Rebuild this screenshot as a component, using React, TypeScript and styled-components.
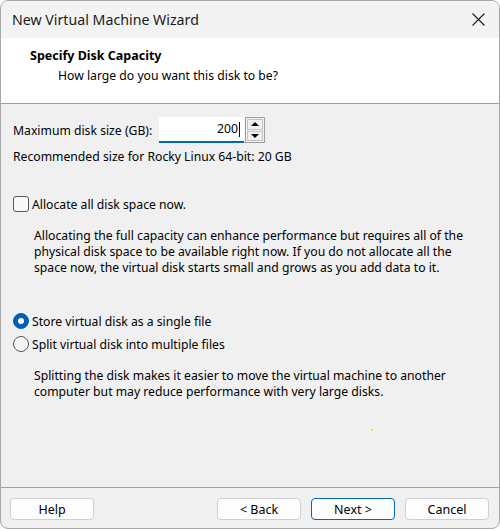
import React from 'react'
import styled, { createGlobalStyle } from 'styled-components'

const GlobalStyle = createGlobalStyle`
  html, body {
    margin: 0;
    padding: 0;
    background: #ffffff;
  }
  * {
    box-sizing: border-box;
  }
`

const Window = styled.div`
  width: 500px;
  height: 529px;
  display: flex;
  flex-direction: column;
  border: 1px solid #a8a8a8;
  border-radius: 8px;
  overflow: hidden;
  background: #f0f0f0;
  font-family: 'Noto Sans', 'DejaVu Sans', sans-serif;
  font-size: 12.2px;
  color: #000000;
`

const TitleBar = styled.div`
  height: 37px;
  flex: none;
  display: flex;
  align-items: center;
  justify-content: space-between;
  padding: 0 14px 0 11px;
  background: #f3f3f3;
  font-size: 14.2px;
  color: #1b1b1b;
`

const CloseButton = styled.div`
  width: 14px;
  height: 14px;
  display: flex;
  align-items: center;
  justify-content: center;
`

const Header = styled.div`
  height: 66px;
  flex: none;
  padding: 9px 0 0 29px;
  background: #ffffff;
  border-bottom: 1px solid #a0a0a0;
`

const HeaderTitle = styled.div`
  font-weight: 700;
  font-size: 12.5px;
  line-height: 18px;
`

const HeaderSub = styled.div`
  padding-left: 28px;
  line-height: 18px;
  margin-top: 2px;
`

const Body = styled.div`
  flex: 1;
  padding: 13px 12px 0 12px;
  position: relative;
`

const SizeRow = styled.div`
  display: flex;
  align-items: center;
  height: 26px;
`

const SizeLabel = styled.div`
  width: 146px;
`

const SizeInput = styled.div`
  width: 85px;
  height: 26px;
  background: #ffffff;
  border-bottom: 2px solid #0067c0;
  display: flex;
  align-items: center;
  justify-content: flex-end;
  padding-right: 4px;
  line-height: 16px;
`

const Caret = styled.span`
  display: inline-block;
  width: 1px;
  height: 15px;
  background: #000000;
  margin-left: 1px;
`

const Spinner = styled.div`
  width: 20px;
  height: 26px;
  margin-left: 1px;
  border: 1px solid #a0a0a0;
  display: flex;
  flex-direction: column;
  padding: 1px;
  gap: 1px;
`

const SpinButton = styled.div`
  flex: 1;
  border: 1px solid #c4c4c4;
  background: #f0f0f0;
  display: flex;
  align-items: center;
  justify-content: center;
`

const Arrow = styled.div<{ $up?: boolean }>`
  width: 0;
  height: 0;
  border-left: 4px solid transparent;
  border-right: 4px solid transparent;
  ${({ $up }) => ($up ? 'border-bottom: 4px solid #000;' : 'border-top: 4px solid #000;')}
`

const Line = styled.div<{ $top?: number }>`
  margin-top: ${({ $top }) => $top ?? 0}px;
  line-height: 16px;
`

const OptionRow = styled.div<{ $top?: number }>`
  display: flex;
  align-items: center;
  gap: 3px;
  height: 20px;
  margin-top: ${({ $top }) => $top ?? 0}px;
`

const CheckBox = styled.div`
  width: 16px;
  height: 16px;
  border: 1px solid #5a5a5a;
  border-radius: 3px;
  background: #f8f8f8;
`

const Radio = styled.div<{ $checked?: boolean }>`
  width: 16px;
  height: 16px;
  border-radius: 50%;
  display: flex;
  align-items: center;
  justify-content: center;
  ${({ $checked }) =>
    $checked
      ? 'background: #005fb8; border: 1px solid #005fb8;'
      : 'background: #f6f6f6; border: 1px solid #5a5a5a;'}
`

const RadioDot = styled.div`
  width: 6px;
  height: 6px;
  border-radius: 50%;
  background: #ffffff;
`

const Paragraph = styled.div<{ $top?: number }>`
  margin-top: ${({ $top }) => $top ?? 0}px;
  padding-left: 21px;
  line-height: 16px;
`

const Sparkle = styled.div`
  position: absolute;
  left: 370px;
  top: 325px;
  width: 2px;
  height: 2px;
  background: #f5e23c;
`

const Footer = styled.div`
  height: 41px;
  flex: none;
  border-top: 1px solid #a0a0a0;
  display: flex;
  padding: 10px 10px 0 9px;
  gap: 10px;
`

const Spacer = styled.div`
  flex: 1;
`

const Button = styled.div<{ $primary?: boolean }>`
  width: 84px;
  height: 22px;
  display: flex;
  align-items: center;
  justify-content: center;
  background: #fdfdfd;
  border: 1px solid ${({ $primary }) => ($primary ? '#0067c0' : '#d0d0d0')};
  border-radius: 4px;
  font-size: 12.5px;
  color: #000000;
`

export default function App() {
  return (
    <>
      <GlobalStyle />
      <Window>
        <TitleBar>
          <span>New Virtual Machine Wizard</span>
          <CloseButton>
            <svg width="13" height="13" viewBox="0 0 13 13">
              <path d="M0.5 0.5 L12.5 12.5 M12.5 0.5 L0.5 12.5" stroke="#1b1b1b" strokeWidth="1.1" fill="none" />
            </svg>
          </CloseButton>
        </TitleBar>
        <Header>
          <HeaderTitle>Specify Disk Capacity</HeaderTitle>
          <HeaderSub>How large do you want this disk to be?</HeaderSub>
        </Header>
        <Body>
          <SizeRow>
            <SizeLabel>Maximum disk size (GB):</SizeLabel>
            <SizeInput>
              200
              <Caret />
            </SizeInput>
            <Spinner>
              <SpinButton>
                <Arrow $up />
              </SpinButton>
              <SpinButton>
                <Arrow />
              </SpinButton>
            </Spinner>
          </SizeRow>
          <Line $top={6}>Recommended size for Rocky Linux 64-bit: 20 GB</Line>
          <OptionRow $top={29}>
            <CheckBox />
            <span>Allocate all disk space now.</span>
          </OptionRow>
          <Paragraph $top={14}>
            Allocating the full capacity can enhance performance but requires all of the
            physical disk space to be available right now. If you do not allocate all the
            space now, the virtual disk starts small and grows as you add data to it.
          </Paragraph>
          <OptionRow $top={35}>
            <Radio $checked>
              <RadioDot />
            </Radio>
            <span>Store virtual disk as a single file</span>
          </OptionRow>
          <OptionRow $top={3}>
            <Radio />
            <span>Split virtual disk into multiple files</span>
          </OptionRow>
          <Paragraph $top={14}>
            Splitting the disk makes it easier to move the virtual machine to another
            computer but may reduce performance with very large disks.
          </Paragraph>
          <Sparkle />
        </Body>
        <Footer>
          <Button>Help</Button>
          <Spacer />
          <Button>&lt; Back</Button>
          <Button $primary>Next &gt;</Button>
          <Button>Cancel</Button>
        </Footer>
      </Window>
    </>
  )
}
